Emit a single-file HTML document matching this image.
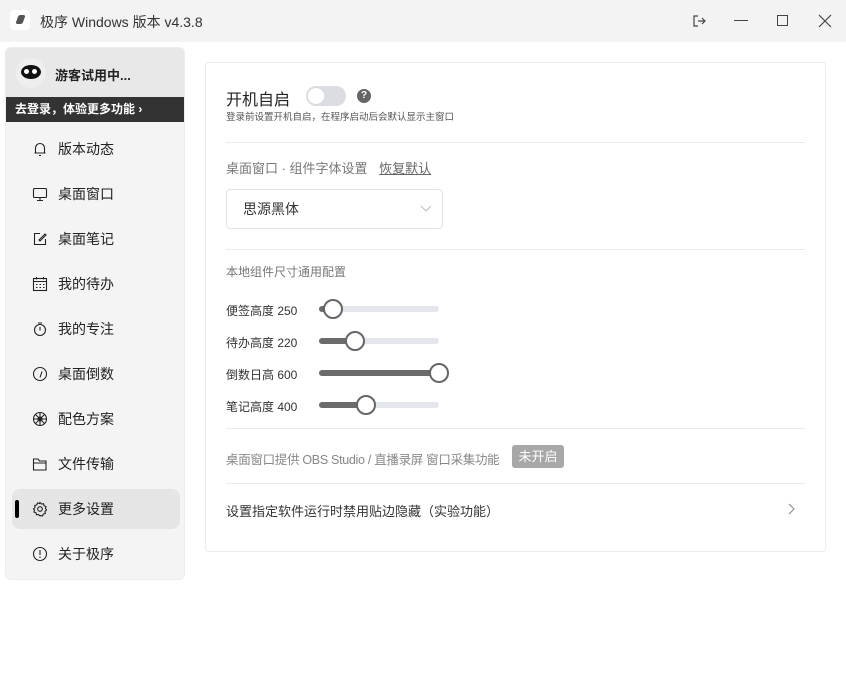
<!DOCTYPE html>
<html><head><meta charset="utf-8"><style>
*{margin:0;padding:0;box-sizing:border-box}
body{width:846px;height:676px;background:#fff;font-family:"Liberation Sans","Noto Sans CJK SC",sans-serif;position:relative;overflow:hidden;color:#222}
.tb{position:absolute;left:0;top:0;width:846px;height:42px;background:#f3f3f3}
.abs{position:absolute}
.side{position:absolute;left:5px;top:47px;width:180px;height:533px;background:#f4f4f4;border-radius:6px;overflow:hidden;border:1px solid #ececec}
.hd{position:absolute;left:0;top:0;width:180px;height:49px;background:#e8e8e8}
.dk{position:absolute;left:0;top:49px;width:180px;height:25px;background:#333;color:#fff;font-size:12px;line-height:25px;padding-left:9px;font-weight:bold}
.it{position:absolute;left:0;width:180px;height:40px;font-size:14px;line-height:40px;padding-left:52px;color:#222}
.it svg{position:absolute;left:26px;top:12px}
.card{position:absolute;left:205px;top:62px;width:621px;height:490px;border:1px solid #ececec;border-radius:4px}
.hr{position:absolute;left:20px;width:579px;height:1px;background:#ebebeb}
.sl{position:absolute;left:20px;font-size:12px;color:#333}
.tr{position:absolute;left:113px;width:120px;height:6px;border-radius:3px;background:#e4e6ee}
.fill{position:absolute;left:0;top:0;height:6px;border-radius:3px;background:#6b6b6b}
.kn{position:absolute;top:-7px;width:20px;height:20px;border-radius:50%;border:2px solid #666;background:#fff}
</style></head><body>
<div class="tb"></div>
<div class="abs" style="left:10px;top:10px;width:20px;height:20px;background:#fff;border-radius:4px"></div>
<div class="abs" style="left:17px;top:15px;width:7px;height:9px;background:#555;transform:skewX(-20deg);border-radius:2px"></div>
<div class="abs" style="left:40px;top:12px;font-size:14px;color:#333">极序 Windows 版本 v4.3.8</div>
<svg class="abs" style="left:692px;top:14px" width="14" height="14" viewBox="0 0 14 14" fill="none" stroke="#444" stroke-width="1.2"><path d="M6 2H2v10h4M6 7h7M10 4l3 3-3 3"/></svg>
<div class="abs" style="left:734px;top:20px;width:14px;height:1px;background:#444"></div>
<div class="abs" style="left:777px;top:15px;width:11px;height:11px;border:1px solid #444"></div>
<svg class="abs" style="left:818px;top:14px" width="14" height="14" stroke="#444" stroke-width="1.2"><path d="M1 1l12 12M13 1L1 13"/></svg>

<div class="side">
<div class="hd">
<div class="abs" style="left:10px;top:10px;width:30px;height:30px;border-radius:50%;background:#eee"></div>
<div class="abs" style="left:15px;top:17px;width:20px;height:14px;border-radius:50%;background:#111"></div>
<div class="abs" style="left:18px;top:21px;width:5px;height:5px;border-radius:50%;background:#fff"></div>
<div class="abs" style="left:26px;top:21px;width:5px;height:5px;border-radius:50%;background:#fff"></div>
<div class="abs" style="left:49px;top:17px;font-size:13px;font-weight:bold">游客试用中...</div>
</div>
<div class="dk">去登录，体验更多功能 ›</div>
<div class="it" style="top:81px">版本动态<svg width="16" height="16" fill="none" stroke="#222" stroke-width="1.1"><path d="M3.5 12V7a4.5 4.5 0 019 0v5H2.5h11M7 14.5h2"/></svg></div>
<div class="it" style="top:126px">桌面窗口<svg width="16" height="16" fill="none" stroke="#222" stroke-width="1.1"><rect x="1.5" y="2.5" width="13" height="9" rx="1"/><path d="M8 11.5v3M5 14.5h6"/></svg></div>
<div class="it" style="top:171px">桌面笔记<svg width="16" height="16" fill="none" stroke="#222" stroke-width="1.1"><path d="M8 2.5H2.5v11h11V8M7 9l6-6 1 1-6 6z"/></svg></div>
<div class="it" style="top:216px">我的待办<svg width="16" height="16" fill="none" stroke="#222" stroke-width="1.1"><rect x="1.5" y="2.5" width="13" height="12"/><path d="M1.5 5.5h13M4.5 1v2.5M11.5 1v2.5M4 8.5h1.5M7.5 8.5h1.5M11 8.5h1.5M4 11.5h1.5M7.5 11.5h1.5M11 11.5h1.5"/></svg></div>
<div class="it" style="top:261px">我的专注<svg width="16" height="16" fill="none" stroke="#222" stroke-width="1.1"><circle cx="8" cy="9" r="5.5"/><path d="M6 2h4M8 6v3.5"/></svg></div>
<div class="it" style="top:306px">桌面倒数<svg width="16" height="16" fill="none" stroke="#222" stroke-width="1.1"><circle cx="8" cy="8" r="6.5"/><path d="M8 11.5l2-6"/></svg></div>
<div class="it" style="top:351px">配色方案<svg width="16" height="16" fill="none" stroke="#222" stroke-width="1.1"><circle cx="8" cy="8" r="6.5"/><circle cx="8" cy="8" r="2"/><path d="M8 1.5v13M1.5 8h13M3.5 3.5l9 9M12.5 3.5l-9 9"/></svg></div>
<div class="it" style="top:396px">文件传输<svg width="16" height="16" fill="none" stroke="#222" stroke-width="1.1"><path d="M1.5 3h4.5l1.5 2h6.5v9h-12.5zM1.5 7h12.5"/></svg></div>
<div class="it" style="top:441px;left:6px;width:168px;background:#e5e5e5;border-radius:8px;padding-left:46px">更多设置<svg style="left:20px" width="16" height="16" fill="none" stroke="#222" stroke-width="1.1"><path d="M8 1.5l1.5 1.5 2 -.3.6 2 1.9 .8-.5 2 1 1.5-1.5 1.5.3 2-2 .6-.8 1.9-2-.5L8 15l-1.5-1.5-2 .3-.6-2-1.9-.8.5-2L1.5 8 3 6.5l-.3-2 2-.6.8-1.9 2 .5z"/><circle cx="8" cy="8" r="2.3"/></svg></div>
<div class="abs" style="left:9px;top:452px;width:4px;height:18px;background:#000;border-radius:2px"></div>
<div class="it" style="top:486px">关于极序<svg width="16" height="16" fill="none" stroke="#222" stroke-width="1.1"><circle cx="8" cy="8" r="6.5"/><path d="M8 4v5M8 10.5v1.5"/></svg></div>
</div>

<div class="card">
<div class="abs" style="left:20px;top:23px;font-size:16px;color:#222">开机自启</div>
<div class="abs" style="left:100px;top:23px;width:40px;height:20px;border-radius:10px;background:#dcdde3"></div>
<div class="abs" style="left:102px;top:25px;width:16px;height:16px;border-radius:50%;background:#fff"></div>
<div class="abs" style="left:151px;top:26px;width:14px;height:14px;border-radius:50%;background:#666;color:#fff;font-size:10px;line-height:14px;text-align:center;font-weight:bold">?</div>
<div class="abs" style="left:20px;top:46px;font-size:9.5px;color:#555">登录前设置开机自启，在程序启动后会默认显示主窗口</div>
<div class="hr" style="top:79px"></div>
<div class="abs" style="left:20px;top:95px;font-size:13px;color:#777">桌面窗口 · 组件字体设置 <span style="margin-left:8px;text-decoration:underline;color:#666">恢复默认</span></div>
<div class="abs" style="left:20px;top:126px;width:217px;height:40px;border:1px solid #e2e2e2;border-radius:4px;font-size:14px;line-height:38px;padding-left:16px;color:#333">思源黑体
<svg style="position:absolute;right:10px;top:15px" width="12" height="8" fill="none" stroke="#bbb"><path d="M1 1l5 5 5-5"/></svg></div>
<div class="hr" style="top:186px"></div>
<div class="abs" style="left:20px;top:200px;font-size:12px;color:#777">本地组件尺寸通用配置</div>
<div class="sl" style="top:239px">便签高度 250</div>
<div class="tr" style="top:243px"><div class="fill" style="width:12px"></div><div class="kn" style="left:4px"></div></div>
<div class="sl" style="top:271px">待办高度 220</div>
<div class="tr" style="top:275px"><div class="fill" style="width:36px"></div><div class="kn" style="left:26px"></div></div>
<div class="sl" style="top:303px">倒数日高 600</div>
<div class="tr" style="top:307px"><div class="fill" style="width:120px"></div><div class="kn" style="left:110px"></div></div>
<div class="sl" style="top:335px">笔记高度 400</div>
<div class="tr" style="top:339px"><div class="fill" style="width:48px"></div><div class="kn" style="left:37px"></div></div>
<div class="hr" style="top:365px"></div>
<div class="abs" style="left:20px;top:386px;font-size:12.5px;letter-spacing:-0.3px;color:#888;white-space:nowrap">桌面窗口提供 OBS Studio / 直播录屏 窗口采集功能</div>
<div class="abs" style="left:306px;top:382px;width:52px;height:23px;border-radius:3px;background:#a8a8a8;color:#fff;font-size:13px;line-height:23px;text-align:center">未开启</div>
<div class="hr" style="top:420px"></div>
<div class="abs" style="left:20px;top:438px;font-size:13px;color:#333">设置指定软件运行时禁用贴边隐藏（实验功能）</div>
<svg class="abs" style="left:582px;top:440px" width="8" height="12" fill="none" stroke="#888"><path d="M1 1l5 5-5 5"/></svg>
</div>
</body></html>
